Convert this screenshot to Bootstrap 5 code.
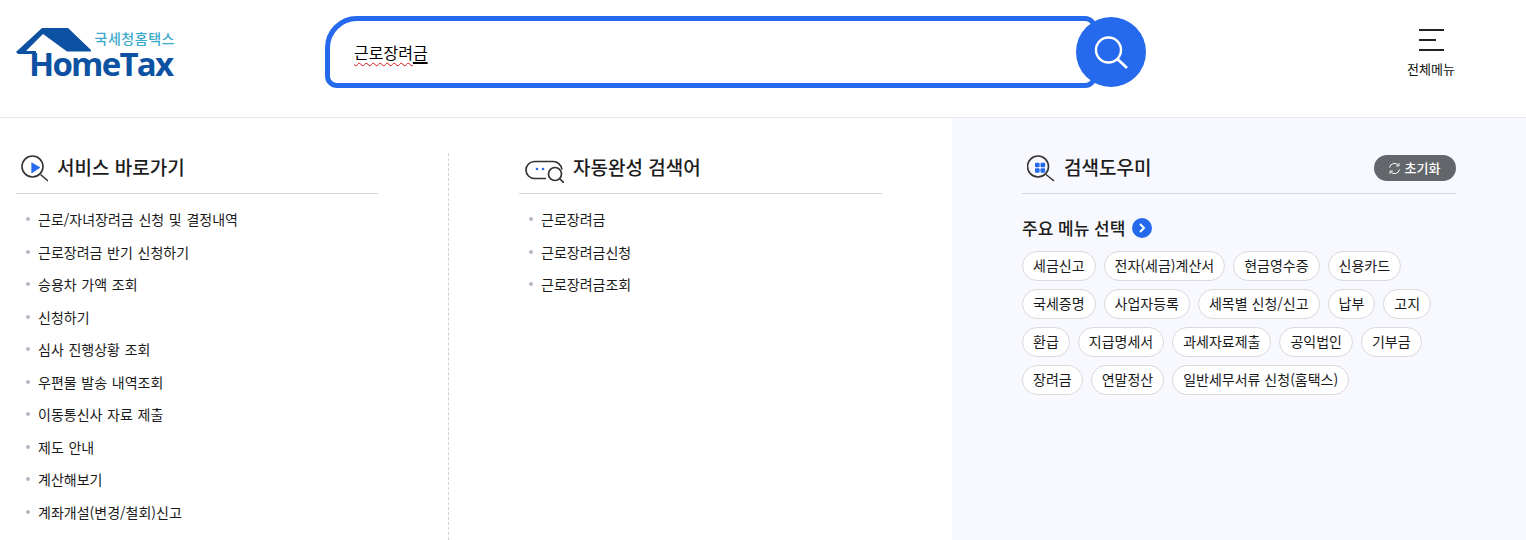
<!doctype html>
<html lang="ko">
<head>
<meta charset="utf-8">
<title>HomeTax</title>
<link href="https://cdn.jsdelivr.net/npm/bootstrap@5.3.0/dist/css/bootstrap.min.css" rel="stylesheet">
<style>
html,body{height:540px;overflow:hidden}
body{font-family:"Noto Sans CJK KR","Noto Sans",sans-serif;color:#111;background:#fff;font-size:14px}
.top-bar{height:118px;border-bottom:1px solid #e5e6ee;padding-left:16px;padding-right:71px;padding-top:16px}
.logo-box{width:309px;height:72px}
.logo-art{display:block}
.logo-en{font-family:"Open Sans",sans-serif;font-size:33px;font-weight:700}
.logo-ko{font-family:"Noto Sans CJK KR",sans-serif;font-size:14px;font-weight:500}
.search-wrap{width:821px;height:72px}
.search-field{width:772px;height:72px;border:5px solid #2569ec;border-radius:32px 12px 12px 12px;padding-left:24px;font-size:16px;line-height:24px;color:#000}
.wavy{text-decoration:underline wavy #e0141c 1px;text-underline-offset:3px}
.solid{text-decoration:underline #000 1.500px;text-underline-offset:3px}
.search-go{width:70px;height:70px;border-radius:50%;background:#2569ec;margin-left:-21px;border:0;padding:0}
.menu-box{width:48px;font-size:13px;line-height:18px;color:#111;margin-top:13px}
.menu-lines{width:25px;height:22px;display:block;margin-bottom:9px}
.main-area{height:422px}
.col-services{width:449px;padding:35px 71px 0 16px;position:relative}
.col-services::after{content:"";position:absolute;left:448px;top:35px;bottom:0;border-left:1px dashed #cfd2dc}
.col-auto{width:503px;padding:35px 70px 0 70px}
.col-help{width:574px;background:#f8f9ff;padding:35px 70px 0 70px}
.head-row{height:41px;border-bottom:1px solid #d5d6da;gap:9px}
.icon-a{margin-left:4px}
.icon-b{margin-left:5px}
.head-title{font-size:19px;font-weight:500;line-height:30px;color:#1c1c1c;margin-top:-1px}
.link-list{list-style:none;margin:9px 0 0;padding:0}
.link-list li{height:32.5px;line-height:32.5px;padding-left:22px;position:relative;color:#1a1a1a;word-spacing:.8px}
.link-list li::before{content:"";position:absolute;left:10px;top:14px;width:4px;height:4px;border-radius:50%;background:#b5b7c3}
.reset-btn{width:82px;height:26px;border-radius:13px;background:#63666b;color:#fff;font-size:13px;font-weight:500;gap:4px;border:0;padding:0 2px 0 0;margin-top:2px}
.pick-title{font-size:17px;font-weight:500;line-height:24px;margin-top:22px;gap:7px;color:#1c1c1c}
.go-dot{width:20px;height:20px;border-radius:50%;background:#2569ec}
.chip-wrap{margin-top:11px;gap:8px;width:434px}
.tag-chip{height:30px;line-height:27px;padding:0 10px;border:1px solid #d9d9dd;border-radius:15px;background:#fff;color:#1a1a1a;font-size:14px;white-space:nowrap}
</style>
</head>
<body>
<header class="top-bar d-flex align-items-start">
  <a class="logo-box d-block text-decoration-none" href="#" aria-label="국세청홈택스">
    <svg class="logo-art" width="170" height="72" viewBox="16 16 170 72">
      <path d="M16 52 42 28H68L91 50V51.500H67L43 34 26 51H36V54H18Z" fill="#0d52a2"/>
      <text class="logo-ko" x="94.500" y="44" fill="#3aa9cc" textLength="80">국세청홈택스</text>
      <text class="logo-en" x="29" y="76" fill="#0d52a2" textLength="145">HomeTax</text>
    </svg>
  </a>
  <div class="search-wrap d-flex align-items-center">
    <div class="search-field d-flex align-items-center flex-shrink-0"><span><span class="wavy">근로장려</span><span class="solid">금</span></span></div>
    <button class="search-go d-flex align-items-center justify-content-center flex-shrink-0" aria-label="검색">
      <svg width="38" height="38" viewBox="0 0 38 38" fill="none" stroke="#fff"><circle cx="16.500" cy="17" r="12.500" stroke-width="2.400"/><path d="M25.500 26 35 35" stroke-width="2.800"/></svg>
    </button>
  </div>
  <div class="ms-auto menu-box text-center">
    <svg class="menu-lines mx-auto" viewBox="0 0 25 22" stroke="#222" stroke-width="2" fill="none"><path d="M0 1H25M0 11H17M0 21H25"/></svg>
    <span class="text-nowrap">전체메뉴</span>
  </div>
</header>
<main class="main-area d-flex">
  <section class="col-services">
    <div class="head-row d-flex align-items-start">
      <svg class="icon-a" width="28" height="30" viewBox="0 0 28 30" fill="none"><circle cx="12.500" cy="13.500" r="10.500" stroke="#333" stroke-width="1.600"/><path d="M20.500 21.500 28 28" stroke="#333" stroke-width="1.600"/><path d="M11.700 9.700 20 14.500 11.700 20Z" fill="#2569ec" stroke="#2569ec" stroke-width=".6" stroke-linejoin="round"/></svg>
      <span class="head-title">서비스 바로가기</span>
    </div>
    <ul class="link-list">
      <li>근로/자녀장려금 신청 및 결정내역</li>
      <li>근로장려금 반기 신청하기</li>
      <li>승용차 가액 조회</li>
      <li>신청하기</li>
      <li>심사 진행상황 조회</li>
      <li>우편물 발송 내역조회</li>
      <li>이동통신사 자료 제출</li>
      <li>제도 안내</li>
      <li>계산해보기</li>
      <li>계좌개설(변경/철회)신고</li>
    </ul>
  </section>
  <section class="col-auto">
    <div class="head-row d-flex align-items-start">
      <svg class="icon-b" width="40" height="30" viewBox="0 0 40 30" fill="none" stroke="#333" stroke-width="1.700"><path d="M22 25.500H10.500a8.500 8.500 0 0 1 0-17H29a9 9 0 0 1 9 8"/><circle cx="31" cy="21" r="6.500"/><path d="M35.500 25.500 40 30"/><circle cx="13" cy="16" r="1.300" fill="#2569ec" stroke="none"/><circle cx="19" cy="16" r="1.300" fill="#2569ec" stroke="none"/></svg>
      <span class="head-title">자동완성 검색어</span>
    </div>
    <ul class="link-list">
      <li>근로장려금</li>
      <li>근로장려금신청</li>
      <li>근로장려금조회</li>
    </ul>
  </section>
  <section class="col-help">
    <div class="head-row d-flex align-items-start">
      <svg class="icon-b" width="28" height="30" viewBox="0 0 28 30" fill="none"><circle cx="11" cy="13.500" r="10.500" stroke="#333" stroke-width="1.600"/><path d="M19 21.500 27 28" stroke="#333" stroke-width="1.600"/><g fill="#2569ec"><rect x="8" y="9.700" width="4.600" height="4.600" rx="1"/><rect x="13.500" y="9.700" width="4.600" height="4.600" rx="1"/><rect x="8" y="15.200" width="4.600" height="4.600" rx="1"/><rect x="13.500" y="15.200" width="4.600" height="4.600" rx="1"/></g></svg>
      <span class="head-title flex-grow-1">검색도우미</span>
      <button class="reset-btn d-flex align-items-center justify-content-center flex-shrink-0">
        <svg width="13" height="13" viewBox="0 0 13 13" fill="none" stroke="#fff" stroke-width="1"><path d="M1.500 5.500A5 5 0 0 1 10.500 3.500M11.500 7.500A5 5 0 0 1 2.500 9.500"/><path d="M11 1V4H8M2 12V9H5" stroke-width=".9"/></svg>
        <span>초기화</span>
      </button>
    </div>
    <div class="pick-title d-flex align-items-center">
      <span>주요 메뉴 선택</span>
      <span class="go-dot d-flex align-items-center justify-content-center"><svg width="8" height="10" viewBox="0 0 8 10" fill="none" stroke="#fff" stroke-width="2"><path d="M2 1 6 5 2 9"/></svg></span>
    </div>
    <div class="chip-wrap d-flex flex-wrap">
      <a class="tag-chip text-decoration-none">세금신고</a>
      <a class="tag-chip text-decoration-none">전자(세금)계산서</a>
      <a class="tag-chip text-decoration-none">현금영수증</a>
      <a class="tag-chip text-decoration-none">신용카드</a>
      <a class="tag-chip text-decoration-none">국세증명</a>
      <a class="tag-chip text-decoration-none">사업자등록</a>
      <a class="tag-chip text-decoration-none">세목별 신청/신고</a>
      <a class="tag-chip text-decoration-none">납부</a>
      <a class="tag-chip text-decoration-none">고지</a>
      <a class="tag-chip text-decoration-none">환급</a>
      <a class="tag-chip text-decoration-none">지급명세서</a>
      <a class="tag-chip text-decoration-none">과세자료제출</a>
      <a class="tag-chip text-decoration-none">공익법인</a>
      <a class="tag-chip text-decoration-none">기부금</a>
      <a class="tag-chip text-decoration-none">장려금</a>
      <a class="tag-chip text-decoration-none">연말정산</a>
      <a class="tag-chip text-decoration-none">일반세무서류 신청(홈택스)</a>
    </div>
  </section>
</main>
<script src="https://cdn.jsdelivr.net/npm/bootstrap@5.3.0/dist/js/bootstrap.bundle.min.js"></script>
</body>
</html>
